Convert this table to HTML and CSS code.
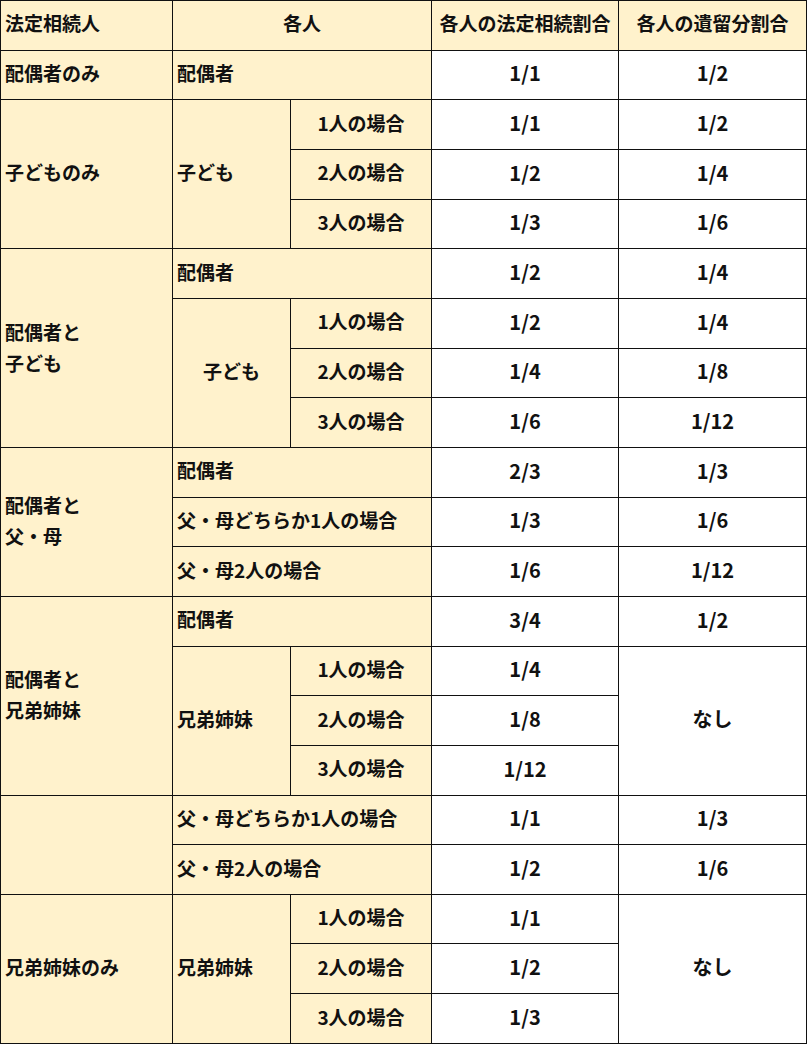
FILE: index.html
```html
<!DOCTYPE html>
<html lang="ja">
<head>
<meta charset="utf-8">
<title>法定相続割合と遺留分割合</title>
<link rel="stylesheet" href="styles.css">
</head>
<body>
<table class="heir-table">
  <colgroup>
    <col class="c1"><col class="c2"><col class="c3"><col class="c4"><col class="c5">
  </colgroup>
  <tr>
    <th class="lbl">法定相続人</th>
    <th class="lbl center" colspan="2">各人</th>
    <th class="lbl center">各人の法定相続割合</th>
    <th class="lbl center">各人の遺留分割合</th>
  </tr>
  <tr>
    <td class="lbl">配偶者のみ</td>
    <td class="lbl" colspan="2">配偶者</td>
    <td class="val">1/1</td><td class="val">1/2</td>
  </tr>
  <tr>
    <td class="lbl" rowspan="3">子どものみ</td>
    <td class="lbl" rowspan="3">子ども</td>
    <td class="lbl center">1人の場合</td>
    <td class="val">1/1</td><td class="val">1/2</td>
  </tr>
  <tr>
    <td class="lbl center">2人の場合</td>
    <td class="val">1/2</td><td class="val">1/4</td>
  </tr>
  <tr>
    <td class="lbl center">3人の場合</td>
    <td class="val">1/3</td><td class="val">1/6</td>
  </tr>
  <tr>
    <td class="lbl two" rowspan="4">配偶者と<br>子ども</td>
    <td class="lbl" colspan="2">配偶者</td>
    <td class="val">1/2</td><td class="val">1/4</td>
  </tr>
  <tr>
    <td class="lbl center" rowspan="3">子ども</td>
    <td class="lbl center">1人の場合</td>
    <td class="val">1/2</td><td class="val">1/4</td>
  </tr>
  <tr>
    <td class="lbl center">2人の場合</td>
    <td class="val">1/4</td><td class="val">1/8</td>
  </tr>
  <tr>
    <td class="lbl center">3人の場合</td>
    <td class="val">1/6</td><td class="val">1/12</td>
  </tr>
  <tr>
    <td class="lbl two" rowspan="3">配偶者と<br>父・母</td>
    <td class="lbl" colspan="2">配偶者</td>
    <td class="val">2/3</td><td class="val">1/3</td>
  </tr>
  <tr>
    <td class="lbl" colspan="2">父・母どちらか1人の場合</td>
    <td class="val">1/3</td><td class="val">1/6</td>
  </tr>
  <tr>
    <td class="lbl" colspan="2">父・母2人の場合</td>
    <td class="val">1/6</td><td class="val">1/12</td>
  </tr>
  <tr>
    <td class="lbl two" rowspan="4">配偶者と<br>兄弟姉妹</td>
    <td class="lbl" colspan="2">配偶者</td>
    <td class="val">3/4</td><td class="val">1/2</td>
  </tr>
  <tr>
    <td class="lbl" rowspan="3">兄弟姉妹</td>
    <td class="lbl center">1人の場合</td>
    <td class="val">1/4</td>
    <td class="val" rowspan="3">なし</td>
  </tr>
  <tr>
    <td class="lbl center">2人の場合</td>
    <td class="val">1/8</td>
  </tr>
  <tr>
    <td class="lbl center">3人の場合</td>
    <td class="val">1/12</td>
  </tr>
  <tr>
    <td class="lbl" rowspan="2"></td>
    <td class="lbl" colspan="2">父・母どちらか1人の場合</td>
    <td class="val">1/1</td><td class="val">1/3</td>
  </tr>
  <tr>
    <td class="lbl" colspan="2">父・母2人の場合</td>
    <td class="val">1/2</td><td class="val">1/6</td>
  </tr>
  <tr>
    <td class="lbl" rowspan="3">兄弟姉妹のみ</td>
    <td class="lbl" rowspan="3">兄弟姉妹</td>
    <td class="lbl center">1人の場合</td>
    <td class="val">1/1</td>
    <td class="val" rowspan="3">なし</td>
  </tr>
  <tr>
    <td class="lbl center">2人の場合</td>
    <td class="val">1/2</td>
  </tr>
  <tr>
    <td class="lbl center">3人の場合</td>
    <td class="val">1/3</td>
  </tr>
</table>
</body>
</html>
```
FILE: styles.css
```css
html, body {
  margin: 0;
  padding: 0;
  background: #ffffff;
}

.heir-table {
  border-collapse: collapse;
  table-layout: fixed;
  width: 806px;
  font-family: "Noto Sans CJK JP", "Noto Sans", sans-serif;
  font-size: 19px;
  font-weight: 700;
  color: #111111;
}

.c1 { width: 172px; }
.c2 { width: 118px; }
.c3 { width: 141px; }
.c4 { width: 187px; }
.c5 { width: 188px; }

.heir-table tr {
  height: 49.67px;
}

.heir-table th,
.heir-table td {
  border: 1px solid #111111;
  padding: 0 4px 3px 4px;
  vertical-align: middle;
  white-space: nowrap;
  line-height: 1.2;
  font-weight: 700;
}

.lbl {
  background: #fff2cc;
  text-align: left;
}

.center {
  text-align: center;
}

.val {
  background: #ffffff;
  text-align: center;
  font-size: 20px;
}

.two {
  line-height: 31px !important;
}
```
